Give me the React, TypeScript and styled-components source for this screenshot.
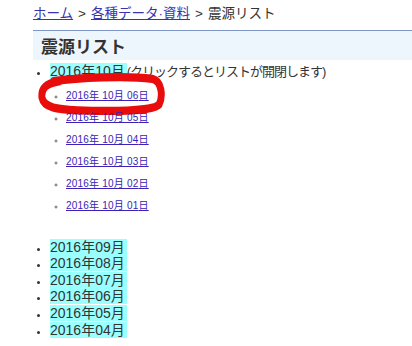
import React from 'react'
import styled, { createGlobalStyle } from 'styled-components'

const GlobalStyle = createGlobalStyle`
    body {
        margin: 0;
        background: #fff;
        font-family: "Liberation Sans", "Noto Sans CJK JP", sans-serif;
        color: #333;
    }
`

const days = ['06', '05', '04', '03', '02', '01']
const months = ['09', '08', '07', '06', '05', '04']

const App: React.FC = () => {
    return (
        <>
            <GlobalStyle />
            <Page>
                <Crumbs>
                    <a href="#">ホーム</a>
                    <Sep>&gt;</Sep>
                    <a href="#">各種データ·資料</a>
                    <Sep>&gt;</Sep>
                    <span>震源リスト</span>
                </Crumbs>
                <TitleBar>
                    <h1>震源リスト</h1>
                </TitleBar>
                <MonthList>
                    <MonthItem>
                        <Mark>2016年10月</Mark>
                        <Note>(クリックするとリストが開閉します)</Note>
                        <DayList>
                            {days.map((d, i) => (
                                <DayItem key={d}>
                                    <DayLink href="#">2016年 10月 {d}日 </DayLink>
                                    {i === 0 && (
                                        <Circle viewBox="0 0 130 36" preserveAspectRatio="none">
                                            <path
                                                d="M16 7 C40 4 90 2 116 5 C126 7 127 20 123 27 C117 33 70 33 40 32 C20 31 6 30 4 21 C3 13 8 9 22 7"
                                                fill="none"
                                                stroke="#e80c0c"
                                                strokeWidth="7"
                                                strokeLinecap="round"
                                            />
                                        </Circle>
                                    )}
                                </DayItem>
                            ))}
                        </DayList>
                    </MonthItem>
                    {months.map((m) => (
                        <MonthItem key={m}>
                            <Mark>2016年{m}月</Mark>
                        </MonthItem>
                    ))}
                </MonthList>
            </Page>
        </>
    )
}

const Page = styled.div`
    padding: 5px 0 0 33px;
`

const Crumbs = styled.div`
    font-size: 13.5px;
    line-height: 18px;
    color: #333;
    display: flex;
    align-items: center;
    a {
        color: #3a33b0;
        text-decoration: underline;
    }
`

const Sep = styled.span`
    margin: 0 5px;
`

const TitleBar = styled.div`
    margin-top: 7px;
    border-top: 1px solid #7d95c7;
    background: #eef6fd;
    height: 29px;
    display: flex;
    align-items: center;
    padding-left: 8px;
    h1 {
        margin: 0;
        font-size: 17px;
        font-weight: bold;
        color: #333;
    }
`

const MonthList = styled.ul`
    margin: 3px 0 0;
    padding-left: 17px;
    list-style: disc;
    font-size: 14px;
    line-height: 16.6px;
`

const MonthItem = styled.li`
    &::marker {
        font-size: 11px;
    }
`

const Mark = styled.span`
    background: #99ffff;
    padding-right: 2px;
`

const Note = styled.span`
    font-size: 13px;
    letter-spacing: -1px;
`

const DayList = styled.ul`
    list-style: circle;
    padding-left: 16px;
    margin: 4px 0 22px;
    font-size: 10px;
    line-height: 22px;
`

const DayItem = styled.li`
    position: relative;
    color: #666;
    &::marker {
        font-size: 8px;
    }
`

const DayLink = styled.a`
    color: #3a22b8;
    letter-spacing: 0.2px;
    text-decoration: underline;
`

const Circle = styled.svg`
    position: absolute;
    left: -28px;
    top: -12px;
    width: 128px;
    height: 42px;
    pointer-events: none;
`

export default App
